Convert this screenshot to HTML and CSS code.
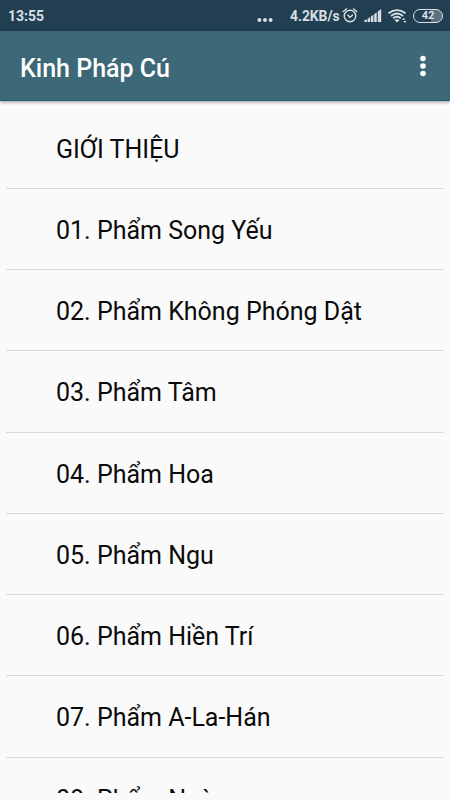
FILE: index.html
```html
<!DOCTYPE html>
<html lang="vi">
<head>
<meta charset="utf-8">
<title>Kinh Pháp Cú</title>
<link rel="stylesheet" href="styles.css">
</head>
<body>
<div class="status">
  <span class="clock">13:55</span>
  <svg class="dots" width="16" height="6" viewBox="0 0 16 6"><circle cx="2.4" cy="3" r="2"/><circle cx="8" cy="3" r="2"/><circle cx="13.6" cy="3" r="2"/></svg>
  <span class="speed">4.2KB/s</span>
  <svg class="icons" width="66" height="20" viewBox="0 0 66 20">
    <g fill="none" stroke="#d8dfe4" stroke-width="1.4">
      <circle cx="8" cy="10" r="5.8"/>
      <path d="M.8 6 4.800 2.500M15.200 6 11.200 2.500M5.500 8.800 8 11.300 11 8.800"/>
    </g>
    <g fill="#d8dfe4">
      <path d="M22.300 14.500l2.500-1.200V16h-2.500zM25.600 12.700l2.500-1.400V16h-2.500zM28.900 10.500l2.500-1.700V16h-2.500zM32.200 8.200l2.500-1.700V16h-2.500zM35.800 5.500l3.400-2.500V16h-3.400z"/>
      <path d="M52.500 14.100Q55 12.300 57.500 14.100L55 16.500z"/>
      <path d="M60 13.800l1.700-2 1.700 2zM61.300 15h3.200l-1.600 2z"/>
    </g>
    <g fill="none" stroke="#d8dfe4" stroke-width="1.900">
      <path d="M46.500 7.300Q55 .900 63.500 7.300M49 9.900Q55 5.300 61 9.900M51.200 12.300Q55 9.300 58.800 12.300"/>
    </g>
  </svg>
  <span class="battery">42</span>
</div>
<header class="bar">
  <h1>Kinh Pháp Cú</h1>
  <svg width="8" height="24" viewBox="0 0 8 24"><g fill="#fff"><circle cx="4" cy="4.500" r="2.800"/><circle cx="4" cy="12" r="2.800"/><circle cx="4" cy="19.500" r="2.800"/></g></svg>
</header>
<main class="content">
  <ul class="list">
    <li>GIỚI THIỆU</li>
    <li>01. Phẩm Song Yếu</li>
    <li>02. Phẩm Không Phóng Dật</li>
    <li>03. Phẩm Tâm</li>
    <li>04. Phẩm Hoa</li>
    <li>05. Phẩm Ngu</li>
    <li>06. Phẩm Hiền Trí</li>
    <li>07. Phẩm A-La-Hán</li>
    <li>08. Phẩm Ngàn</li>
  </ul>
</main>
</body>
</html>
```
FILE: styles.css
```css
* { box-sizing: border-box; }
body {
  margin: 0;
  height: 800px;
  overflow: hidden;
  display: flex;
  flex-direction: column;
  background: #fafafa;
  font-family: Roboto, "Noto Sans", sans-serif;
}
.status {
  flex: none;
  height: 31px;
  display: flex;
  align-items: center;
  padding: 1px 7px 0 8px;
  background: #213f51;
  color: #d8dfe4;
  font-size: 14px;
  font-weight: 700;
}
.clock { flex: 1; font-size: 14px; }
.dots { fill: #d8dfe4; margin: 7px 17px 0 0; }
.speed { width: 52px; font-size: 13.8px; white-space: nowrap; }
.icons { flex: none; margin-right: 5px; }
.battery {
  width: 30px;
  height: 14px;
  margin-top: -1px;
  border: 1.5px solid #d8dfe4;
  border-radius: 7px;
  background: linear-gradient(90deg, #213f51 0, #213f51 60%, #5c7280 60%);
  font-size: 11px;
  line-height: 12px;
  text-align: center;
}
.bar {
  flex: none;
  height: 70px;
  display: flex;
  align-items: center;
  justify-content: space-between;
  padding: 1px 23.5px 0 20px;
  background: #3c6877;
  border-bottom: 1px solid #1f6175;
  box-shadow: 0 1px 4px rgba(0, 0, 0, .4);
  color: #fff;
}
.bar h1 { margin: 5px 0 0; font-size: 25px; font-weight: 500; line-height: 30px; }
.content { flex: 1; min-height: 0; padding: 6.5px 6px 7px; }
.list {
  height: 100%;
  margin: 0;
  padding: 0;
  overflow: hidden;
  list-style: none;
}
.list li {
  height: 81.25px;
  padding: 2px 0 0 50px;
  border-bottom: 1px solid #d9d9d9;
  color: #0a0a0a;
  font-size: 25px;
  line-height: 80px;
}
```
